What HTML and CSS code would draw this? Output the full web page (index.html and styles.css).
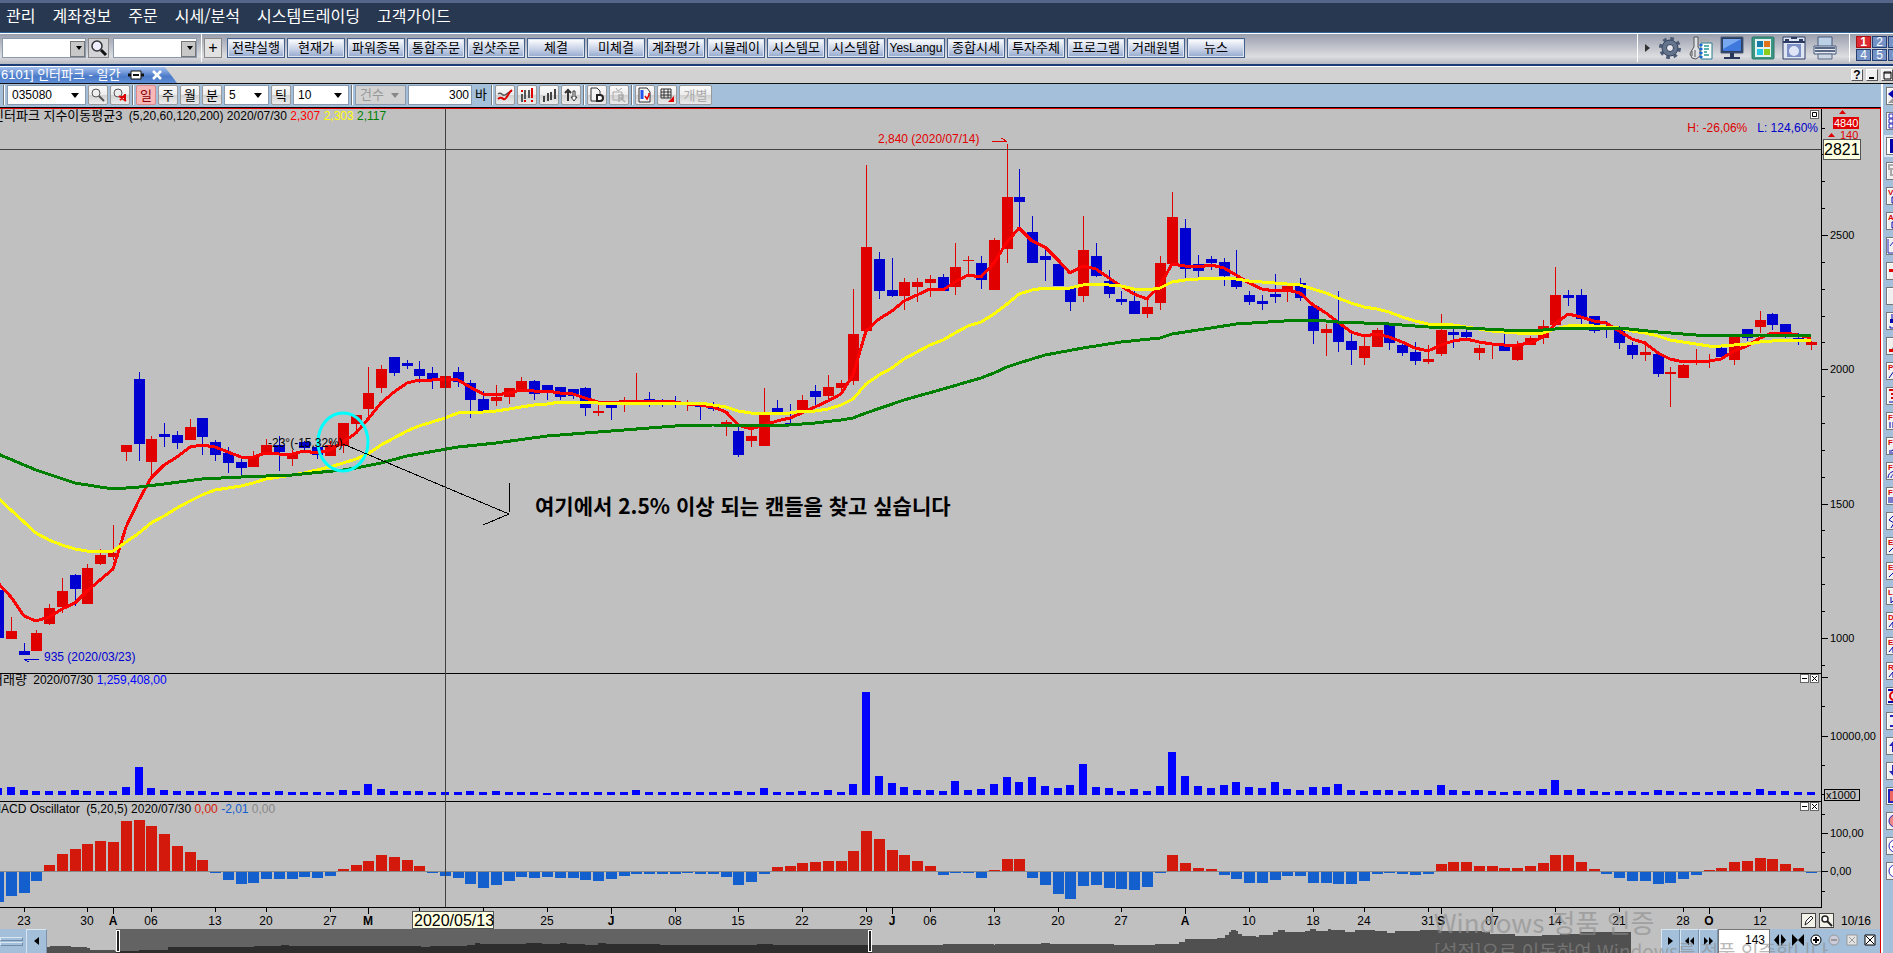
FILE: index.html
```
<!DOCTYPE html>
<html lang="ko">
  <head>
    <meta charset="utf-8">
    <title>인터파크 - 일간</title>
    <link rel="stylesheet" href="styles.css">
  </head>
  <body>
    <nav class="menu">
      <a href="#">관리</a>
      <a href="#">계좌정보</a>
      <a href="#">주문</a>
      <a href="#">시세/분석</a>
      <a href="#">시스템트레이딩</a>
      <a href="#">고객가이드</a>
    </nav>

    <div class="toolbar">
      <span class="combo boxed"><select aria-label="종목"><option></option></select></span>
      <button type="button" class="find" aria-label="검색">
        <svg width="18" height="18" viewBox="0 0 18 18"><circle cx="7" cy="7" r="5" fill="#eef" stroke="#333" stroke-width="1.5"/><path d="M11 11l5 5" stroke="#111" stroke-width="3"/></svg>
      </button>
      <span class="combo boxed low"><select aria-label="화면"><option></option></select></span>
      <i class="bar"></i>
      <button type="button" class="plus">+</button>
      <div class="quick">
        <button type="button">전략실행</button>
        <button type="button">현재가</button>
        <button type="button">파워종목</button>
        <button type="button">통합주문</button>
        <button type="button">원샷주문</button>
        <button type="button">체결</button>
        <button type="button">미체결</button>
        <button type="button">계좌평가</button>
        <button type="button">시뮬레이</button>
        <button type="button">시스템모</button>
        <button type="button">시스템합</button>
        <button type="button">YesLangu</button>
        <button type="button">종합시세</button>
        <button type="button">투자주체</button>
        <button type="button">프로그램</button>
        <button type="button">거래원별</button>
        <button type="button">뉴스</button>
      </div>
      <i class="bar push"></i>
      <div class="apps">
        <svg class="more" width="5" height="8" viewBox="0 0 5 8"><path d="M0 0l5 4-5 4z" fill="#333"/></svg>
        <button type="button" aria-label="설정">
          <svg width="24" height="24" viewBox="0 0 24 24"><circle cx="12" cy="12" r="8" fill="#66758e" stroke="#33415c"/><circle cx="12" cy="12" r="9.5" fill="none" stroke="#4b5a75" stroke-width="3" stroke-dasharray="3.7 3.76"/><circle cx="12" cy="12" r="3.5" fill="#e8e8ee" stroke="#33415c"/></svg>
        </button>
        <button type="button" aria-label="계정">
          <svg width="24" height="24" viewBox="0 0 24 24"><path d="M5 1h4v10l2 3v6l-4 3-4-1-2-4 2-4 2-3z" fill="#dde1e6" stroke="#555"/><path d="M3 15v5M6 14v7" stroke="#555" fill="none"/><path d="M12 6V4h7v2" stroke="#aaa" stroke-width="2" fill="none"/><path d="M12 7h11v16H12z" fill="#fff" stroke="#2b7a8f"/><path d="M15 10h5M15 13h5M15 16h3M15 19h5" stroke="#2a9a98" stroke-width="1.5"/><path d="M12 8v14" stroke="#1a66d8" stroke-width="3" stroke-dasharray="2 2"/></svg>
        </button>
        <button type="button" aria-label="모니터">
          <svg width="24" height="24" viewBox="0 0 24 24"><path d="M1 1h22v16H1z" fill="#2d3f60" stroke="#4a5c7c"/><path d="M3 3h18v12H3z" fill="#3f79dd"/><path d="M3 3h18L3 13z" fill="#78a8f0"/><path d="M10 17h4v4h6v2H4v-2h6z" fill="#28385a"/></svg>
        </button>
        <button type="button" aria-label="화면배치">
          <svg width="24" height="24" viewBox="0 0 24 24"><rect x="1" y="1" width="22" height="22" rx="1" fill="#3a9584" stroke="#2c7768"/><path d="M4 3h16v18H4z" fill="#e3f2ee"/><path d="M6 5h6v6H6z" fill="#167aa8"/><path d="M13 5h6v6h-6z" fill="#e0721a"/><path d="M6 13h6v6H6z" fill="#26c7e2"/><path d="M13 13h6v6h-6z" fill="#8ccc1a"/></svg>
        </button>
        <button type="button" aria-label="캡처">
          <svg width="24" height="24" viewBox="0 0 24 24"><path d="M1 1h22v22H1z" fill="#dfe5f3" stroke="#2d3c62"/><path d="M1 6h22" stroke="#2d3c62" stroke-width="2"/><path d="M3 4h4M9 2h6M17 4h4" stroke="#2d3c62" stroke-width="2"/><path d="M5 8h14v13H5z" fill="#7d90c6"/><circle cx="12" cy="15" r="5" fill="#dfe5f7"/></svg>
        </button>
        <button type="button" aria-label="인쇄">
          <svg width="24" height="24" viewBox="0 0 24 24"><path d="M5 1h14v10H5z" fill="#bcd0e6" stroke="#46597a"/><path d="M1 10h22v8H1z" fill="#e8ebf0" stroke="#46597a"/><path d="M2 12h20M2 15h20" stroke="#5a6a86" stroke-width="2"/><path d="M5 18h14v5H5z" fill="#cdd7e4" stroke="#5a6a86"/></svg>
        </button>
      </div>
      <i class="bar"></i>
      <div class="desks">
        <button type="button" class="on">1</button><button type="button">2</button><button type="button">3</button>
        <button type="button">4</button><button type="button">5</button><button type="button">6</button>
      </div>
    </div>

    <div class="tabs">
      <div class="tab">
        <span>6101] 인터파크 - 일간</span>
        <svg width="18" height="10" viewBox="0 0 18 10"><path d="M5 5H1M17 5h-4" stroke="#111" stroke-width="3"/><path d="M4 1h10v8H4z" fill="#fff" stroke="#111"/><path d="M6 5h6" stroke="#111" stroke-width="2"/></svg>
        <button type="button" aria-label="닫기"><svg width="10" height="10" viewBox="0 0 10 10"><path d="M1 1l8 8M9 1L1 9" stroke="#fff" stroke-width="2.5"/></svg></button>
      </div>
      <div class="win">
        <button type="button">?</button>
        <button type="button" aria-label="최소화"><svg width="9" height="9" viewBox="0 0 9 9"><path d="M1 7h5" stroke="#000" stroke-width="2"/></svg></button>
        <button type="button" aria-label="최대화"><svg width="9" height="9" viewBox="0 0 9 9"><path d="M1 1h7v7H1zM1 2h7" fill="none" stroke="#000"/></svg></button>
      </div>
    </div>

    <div class="work">
      <main>
        <div class="tools">
          <i class="bar"></i>
          <span class="combo code"><select aria-label="종목코드"><option>035080</option></select></span>
          <button type="button" aria-label="종목검색"><svg width="14" height="14" viewBox="0 0 14 14"><circle cx="5" cy="5" r="4" fill="#eee" stroke="#555"/><path d="M8 8l5 5" stroke="#555" stroke-width="2"/></svg></button>
          <button type="button" aria-label="검색취소"><svg width="14" height="14" viewBox="0 0 14 14"><circle cx="5" cy="5" r="4" fill="#eee" stroke="#555"/><path d="M6 8l7 5M12 6v6M6 9h7M7 12l5-5" stroke="#d00" stroke-width="2"/></svg></button>
          <i class="bar"></i>
          <div class="period">
            <button type="button" class="on">일</button>
            <button type="button">주</button>
            <button type="button">월</button>
            <button type="button">분</button>
          </div>
          <span class="combo min"><select aria-label="분"><option>5</option></select></span>
          <button type="button">틱</button>
          <span class="combo tick"><select aria-label="틱"><option>10</option></select></span>
          <i class="bar"></i>
          <span class="combo count"><select aria-label="건수" disabled><option>건수</option></select></span>
          <label class="bars"><input type="text" value="300">바</label>
          <i class="bar"></i>
          <div class="draw">
            <button type="button" aria-label="추세"><svg width="16" height="16" viewBox="0 0 16 16"><path d="M1 7c4-3 4 3 7 1s4-3 7-4" fill="none" stroke="#555" stroke-width="1.5"/><path d="M1 12c5-4 5 3 8-1s3-6 6-8" fill="none" stroke="#e00000" stroke-width="2"/></svg></button>
            <button type="button" aria-label="캔들"><svg width="16" height="16" viewBox="0 0 16 16"><path d="M3 7v8M6 3v9M10 3v8" stroke="#555" stroke-width="2"/><path d="M13 1v10M3 3v2M6 13v2M13 13v2" stroke="#e00000" stroke-width="2"/></svg></button>
            <button type="button" aria-label="바"><svg width="16" height="16" viewBox="0 0 16 16"><path d="M3 9v6M7 6v8M10 5v8M14 2v10" stroke="#444" stroke-width="2"/></svg></button>
            <button type="button" aria-label="뒤집기"><svg width="16" height="16" viewBox="0 0 16 16"><path d="M5 14V4M2 6l3-3 3 3" stroke="#333" stroke-width="2" fill="none"/><path d="M10 4h2v6h2l-3 4-3-4h2z" fill="#fff" stroke="#333"/></svg></button>
          </div>
          <i class="bar"></i>
          <button type="button" aria-label="문서"><svg width="16" height="16" viewBox="0 0 16 16"><path d="M2 1h6l3 3v10H2z" fill="#f4f4f4" stroke="#333"/><path d="M8 8h3c4 0 4 6 0 6H8z" fill="#fff" stroke="#222" stroke-width="2"/></svg></button>
          <button type="button" aria-label="새로고침" disabled><svg width="16" height="16" viewBox="0 0 16 16"><path d="M2 5h9v8H2zM5 1l2 3 4-3" fill="none" stroke="#aaa"/><path d="M8 8h4v3H8zM8 11v4M10 11l4 4" stroke="#aaa" fill="none" stroke-width="1.5"/></svg></button>
          <i class="bar"></i>
          <button type="button" aria-label="차트저장"><svg width="16" height="16" viewBox="0 0 16 16"><path d="M2 1h8l3 4v10H2z" fill="#f4f4f4" stroke="#333"/><path d="M5 3v9" stroke="#25e" stroke-width="3"/><path d="M8 9l2 3 2-4v-2" stroke="#e00000" fill="none" stroke-width="1.5"/></svg></button>
          <button type="button" aria-label="격자"><svg width="16" height="16" viewBox="0 0 16 16"><path d="M2 2h10v9H2zM5 2v9M9 2v9M2 5h10M2 8h10" fill="none" stroke="#333"/><path d="M15 9v6H9z" fill="#e00000"/></svg></button>
          <button type="button" class="each" disabled>개별</button>
        </div>

        <div class="stage">
          <svg id="chart"></svg>
          <p class="legend price"><b>인터파크 지수이동평균3</b> (5,20,60,120,200) 2020/07/30 <em class="red">2,307</em> <em class="yellow">2,303</em> <em class="green">2,117</em></p>
          <p class="legend vol"><b>거래량</b> 2020/07/30 <em class="blue">1,259,408,00</em></p>
          <p class="legend macd">MACD Oscillator &nbsp;(5,20,5) 2020/07/30 <em class="crimson">0,00</em> <em class="azure">-2,01</em> <em class="grey">0,00</em></p>
          <p class="range"><em class="up">H: -26,06%</em><em class="down">L: 124,60%</em></p>
          <div class="panebtn first"><button type="button" aria-label="최대화"><svg width="7" height="7" viewBox="0 0 7 7"><path d="M1.5 1.5h4v4h-4z" fill="none" stroke="#000"/></svg></button></div>
          <div class="panebtn second">
            <button type="button" aria-label="접기"><svg width="7" height="7" viewBox="0 0 7 7"><path d="M1 3.5h5" stroke="#000"/></svg></button>
            <button type="button" aria-label="닫기"><svg width="7" height="7" viewBox="0 0 7 7"><path d="M1 1l5 5M6 1L1 6" stroke="#000"/></svg></button>
          </div>
          <div class="panebtn third">
            <button type="button" aria-label="접기"><svg width="7" height="7" viewBox="0 0 7 7"><path d="M1 3.5h5" stroke="#000"/></svg></button>
            <button type="button" aria-label="닫기"><svg width="7" height="7" viewBox="0 0 7 7"><path d="M1 1l5 5M6 1L1 6" stroke="#000"/></svg></button>
          </div>
          <div class="datebtn">
            <button type="button" aria-label="편집"><svg width="12" height="12" viewBox="0 0 12 12"><path d="M2 10l1-4 5-5 2 2-5 5z" fill="#fff" stroke="#222"/></svg></button>
            <button type="button" aria-label="확대"><svg width="12" height="12" viewBox="0 0 12 12"><circle cx="4" cy="4" r="3" fill="#fff" stroke="#222" stroke-width="1.5"/><path d="M6 6l5 5" stroke="#222" stroke-width="2"/></svg></button>
            <span>10/16</span>
          </div>
        </div>

        <div class="scroller">
          <div class="grip"><i></i><i></i></div>
          <button type="button" class="step" aria-label="이전"><svg width="5" height="8" viewBox="0 0 5 8"><path d="M5 0L0 4l5 4z"/></svg></button>
          <svg id="overview"></svg>
          <button type="button" class="step" aria-label="다음"><svg width="5" height="8" viewBox="0 0 5 8"><path d="M0 0l5 4-5 4z"/></svg></button>
          <button type="button" class="step" aria-label="뒤로"><svg width="9" height="8" viewBox="0 0 9 8"><path d="M4 0L0 4l4 4zM9 0L5 4l4 4z"/></svg></button>
          <button type="button" class="step" aria-label="앞으로"><svg width="9" height="8" viewBox="0 0 9 8"><path d="M0 0l4 4-4 4zM5 0l4 4-4 4z"/></svg></button>
          <input type="text" class="shown" aria-label="표시 개수" value="143">
          <div class="zoom">
            <button type="button" aria-label="넓게"><svg width="12" height="12" viewBox="0 0 12 12"><path d="M5 0v12L0 6zM7 0v12l5-6z"/></svg></button>
            <button type="button" aria-label="좁게"><svg width="12" height="12" viewBox="0 0 12 12"><path d="M0 0v12l6-6zM12 0v12L6 6z"/></svg></button>
            <button type="button" aria-label="확대"><svg width="12" height="12" viewBox="0 0 12 12"><circle cx="6" cy="6" r="5" fill="#fff" stroke="#000"/><path d="M3 6h6M6 3v6" stroke="#000" stroke-width="2"/></svg></button>
            <button type="button" aria-label="축소" disabled><svg width="12" height="12" viewBox="0 0 12 12"><circle cx="6" cy="6" r="5" fill="#ccd" stroke="#999"/><path d="M3 6h6" stroke="#999" stroke-width="2"/></svg></button>
            <button type="button" aria-label="맞춤" disabled><svg width="12" height="12" viewBox="0 0 12 12"><path d="M1 1h10v10H1zM3 3l6 6M9 3L3 9" fill="#e4e4e4" stroke="#999"/></svg></button>
            <button type="button" aria-label="초기화"><svg width="12" height="12" viewBox="0 0 12 12"><path d="M1 1h10v10H1zM2 2l8 8M10 2l-8 8" fill="#fff" stroke="#000"/></svg></button>
          </div>
        </div>
      </main>
      <aside class="rail" id="rail"></aside>
    </div>

    <div class="activate">
      <h2>Windows 정품 인증</h2>
      <p>[설정]으로 이동하여 Windows를 정품 인증합니다.</p>
    </div>

    <script src="chart.js"></script>
  </body>
</html>
```
FILE: styles.css
```
* { box-sizing: border-box; }

body { margin: 0; overflow: hidden; background: #c0c0c0; color: #000; font: 12px/14px "Liberation Sans", "Noto Sans CJK KR", sans-serif; }

button { margin: 0; padding: 0; border: 0; background: none; font: inherit; color: inherit; display: flex; align-items: center; justify-content: center; flex-shrink: 0; overflow: hidden; white-space: nowrap; }
input, select { font: inherit; color: inherit; }
em, b { font-style: normal; font-weight: normal; }
svg { display: block; flex-shrink: 0; }

/* main menu */
.menu { display: flex; align-items: center; gap: 17px; height: 33px; padding: 0 6px 5px; border-top: 3px solid #56668a; border-bottom: 1px solid #2f6496; background: #283851; }
.menu a { color: #fff; text-decoration: none; white-space: nowrap; font: 16px/20px "Noto Sans CJK KR", sans-serif; }

/* main toolbar */
.toolbar { display: flex; align-items: center; height: 33px; padding: 0 0 2px 2px; border-top: 1px solid #fff; border-bottom: 2px solid #1c3d75; background: linear-gradient(#9a9fae, #dcdde0 75%, #b8bac2); }
.bar { width: 2px; height: 20px; border-left: 1px solid #777; border-right: 1px solid #fff; flex-shrink: 0; }
.toolbar .bar { height: 28px; border-left: 0; }

.combo { position: relative; height: 20px; flex-shrink: 0; }
.combo select { appearance: none; width: 100%; height: 100%; margin: 0; padding: 0 3px; border: 1px solid #8a9aae; border-radius: 0; background: #fff; }
.combo::after { content: ""; position: absolute; right: 7px; top: 8px; border: 4px solid transparent; border-top: 5px solid #000; border-bottom: 0; pointer-events: none; }
.combo.boxed { width: 84px; }
.combo.boxed::before { content: ""; position: absolute; right: 1px; top: 3px; width: 13px; height: 14px; border: 1px solid #777; background: #c8c8c8; pointer-events: none; z-index: 1; }
.combo.boxed::after { right: 4px; z-index: 2; border-width: 4px 3px 0; }
.combo.low { margin-right: 3px; }

.find { width: 21px; height: 20px; margin: 0 4px 0 2px; border: 1px solid #888; background: #d4d4d8; }
.plus { width: 18px; height: 20px; margin: 0 5px 0 2px; border: 1px solid #888; background: #e2e2e2; font-size: 16px; }
.quick { display: flex; gap: 2px; }
.quick button { width: 58px; height: 20px; border: 1px solid #44608c; background: linear-gradient(#fff, #c3cee4 60%, #93a8ce); font: 13px/16px "Liberation Sans", "Noto Sans CJK KR", sans-serif; box-shadow: inset 0 0 0 1px #dde4f2; }
.quick button:nth-child(12) { font-size: 12px; }
.push { margin-left: auto; }
.apps { display: flex; align-items: center; gap: 7px; padding: 0 11px 0 7px; }
.apps .more { margin-right: 1px; }
.desks { display: grid; grid-template-columns: repeat(3, 15px); gap: 1px; width: 43px; padding-left: 6px; overflow: hidden; flex-shrink: 0; }
.desks button { height: 12px; border: 1px solid #243f70; background: #7592c6; color: #fff; line-height: 10px; }
.desks .on { border-color: #a11; background: #dd2b33; font-weight: bold; }

/* document tab */
.tabs { display: flex; justify-content: space-between; height: 18px; border-top: 1px solid #fff; border-bottom: 1px solid #111; background: #d2d2d2; }
.tab { display: flex; align-items: center; width: 177px; padding-left: 1px; background: linear-gradient(#a3bfee, #4b7ac8 60%, #5f8dd6); clip-path: polygon(0 0, 165px 0, 177px 100%, 0 100%); color: #fff; font-size: 13px; }
.tab span { width: 126px; white-space: nowrap; }
.tab button { margin-left: 7px; }
.win { display: flex; align-items: center; gap: 3px; }
.win button { width: 12px; height: 12px; background: #f0f0f0; border: 1px solid #fff; border-right-color: #555; border-bottom-color: #555; font-weight: bold; }

.work { display: flex; }
main { flex: 1; min-width: 0; }

/* chart tools */
.tools { display: flex; align-items: center; gap: 2px; height: 23px; padding: 0 1px 2px 3px; background: #a3bfd9; font-size: 13px; }
.tools .combo select { padding: 0 4px; font-size: 12px; }
.tools button { width: 20px; height: 20px; border: 1px solid #999; border-radius: 2px; background: linear-gradient(#fafafa, #ececec 50%, #d3d3d3 52%, #ececec); font-family: "Noto Sans CJK KR", sans-serif; }
.tools .on { border-color: #d88; background: #f8b8b8; color: #800; }
.period, .draw { display: flex; gap: 2px; }
.tools .code { width: 79px; }
.tools .min { width: 45px; }
.tools .tick { width: 56px; }
.tools .count { width: 51px; }
.tools .count select { background: #d2d2d2; color: #999; opacity: 1; font-size: 13px; }
.tools .count::after { border-top-color: #888; }
.bars { display: flex; align-items: center; gap: 3px; width: 81px; }
.bars input { width: 64px; height: 20px; border: 1px solid #8a9aae; padding: 0 2px; text-align: right; font-size: 12px; }
.tools .each { width: 33px; color: #aaa; }

/* chart */
.stage { position: relative; border-top: 1px solid #000; border-right: 1px solid #e00000; box-shadow: inset 0 1px #e00000; padding-top: 1px; height: 822px; overflow: hidden; }
#chart { width: 100%; height: 820px; }
#chart text { font: 12px "Liberation Sans", "Noto Sans CJK KR", sans-serif; }
#chart text.value { font-size: 11px; }
#chart text.month { font-weight: bold; }
#chart text.tip { font-size: 16px; }
#chart text.note { font: bold 21px "Noto Sans CJK KR", sans-serif; }
#chart rect, #chart line, #chart polyline { shape-rendering: crispEdges; }

.legend { position: absolute; margin: 0; left: 0; white-space: nowrap; }
.legend b { margin-right: 3px; font-size: 13px; }
.price { top: 1px; text-indent: -8px; }
.vol { top: 565px; text-indent: -9px; }
.macd { top: 694px; text-indent: -9px; }
.red { color: #f00; }
.yellow { color: #ff0; }
.green { color: #008000; }
.blue { color: #00f; }
.crimson { color: #d3190b; }
.azure { color: #125fcd; }
.grey { color: #888; }
.range { position: absolute; right: 62px; top: 13px; margin: 0; display: flex; gap: 10px; }
.up { color: #d00; }
.down { color: #00c; }

.panebtn { position: absolute; right: 61px; display: flex; gap: 1px; }
.panebtn button { width: 9px; height: 9px; border: 1px solid #666; background: #fff; }
.first { top: 2px; }
.second { top: 566px; }
.third { top: 694px; }
.datebtn { position: absolute; right: 6px; bottom: 1px; display: flex; align-items: center; gap: 3px; }
.datebtn button { width: 15px; height: 15px; border: 1px solid #444; background: #f2f2e8; }
.datebtn span { width: 33px; margin-left: 4px; }

/* bottom scroller */
.scroller { display: flex; height: 24px; background: #a3bfd9; border-right: 1px solid #e00000; }
.grip { width: 26px; padding-top: 8px; }
.grip i { display: block; width: 23px; height: 4px; margin-bottom: 1px; border: 1px solid #d8e6f4; border-right-color: #6f8cab; border-bottom-color: #6f8cab; }
.step { width: 19px; padding-bottom: 2px; border: 1px solid #d8e6f4; border-right-color: #7c93ad; border-bottom: 0; }
.grip + .step { width: 21px; }
#overview { flex: 1; min-width: 0; height: 24px; background: #c0c0c0; shape-rendering: crispEdges; }
.shown { width: 52px; height: 24px; border: 1px solid #777; border-bottom: 0; text-align: right; padding: 0 4px 3px; }
.zoom { display: flex; align-items: center; gap: 6px; padding: 0 4px 2px; }

/* drawing tools on the right edge */
.rail { width: 12px; padding: 3px 0 0 3px; border-left: 2px solid #fff; background: #a3bfd9; overflow: hidden; }
.rail button { width: 20px; height: 18px; margin-bottom: 7px; border: 1px solid #777; background: #f0f0f0; box-shadow: inset 1px 1px #fff; }
.rail .on { background: #fff; box-shadow: 0 0 0 2px #dbe7f2; }
.rail text { font: bold 8px "Liberation Sans", sans-serif; }

.activate { position: absolute; left: 76%; top: 908px; margin-left: -5px; color: #8c8c8c; opacity: .6; pointer-events: none; white-space: nowrap; font-family: "Noto Sans CJK KR", sans-serif; }
.activate h2 { margin: 0; font-weight: normal; font-size: 26px; line-height: 28px; }
.activate p { margin: 0; padding-top: 4px; font-size: 19px; line-height: 22px; height: 17px; overflow: hidden; }
```
FILE: chart.js
```
var RED = '#e00000', BLUE = '#0000d0';

// [direction, high, body top, body bottom, low]
var candles = [
  ['d',590,590,638,638],['u',617,631,639,639],['d',643,651,655,655],['u',630,633,651,651],['u',604,608,624,625],
  ['u',578,591,607,613],['d',574,575,589,606],['u',564,568,604,604],['u',549,555,564,565],['u',525,553,557,560],
  ['u',445,445,452,461],['d',372,379,444,461],['u',436,439,462,478],['d',423,434,437,447],['d',431,435,443,449],
  ['u',419,427,440,440],['d',418,418,437,455],['d',440,442,455,461],['d',447,453,463,473],['d',458,462,468,476],
  ['u',451,457,467,467],['u',439,445,453,453],['d',436,445,452,471],['u',450,454,459,466],['d',441,442,448,450],
  ['d',447,447,455,459],['u',441,445,456,456],['u',423,423,446,453],['u',415,415,424,433],['u',367,393,409,416],
  ['u',365,369,388,393],['d',357,357,373,376],['d',360,363,366,369],['d',361,369,376,383],['d',367,373,380,389],
  ['u',375,376,388,388],['d',367,372,382,387],['d',380,383,400,418],['d',391,399,411,411],['u',385,397,401,406],
  ['u',388,388,397,404],['u',377,381,391,391],['d',380,381,394,400],['d',385,385,393,400],['d',387,387,397,400],
  ['d',389,389,396,399],['d',387,388,408,416],['u',401,411,413,416],['d',404,404,408,420],['u',397,400,403,412],
  ['u',373,400,402,402],['d',392,399,402,407],['d',399,401,402,407],['d',396,403,404,408],['u',400,403,404,411],
  ['d',404,405,407,420],['d',402,407,409,411],['u',420,422,424,436],['d',423,431,455,457],['u',427,436,441,447],
  ['u',388,415,446,446],['d',400,408,412,412],['d',404,423,424,424],['u',395,400,411,411],['d',385,391,397,408],
  ['u',375,387,396,400],['u',380,383,388,391],['u',289,334,381,385],['u',165,247,331,331],['d',252,259,291,299],
  ['d',258,290,296,297],['u',278,282,296,310],['u',278,282,287,302],['u',275,279,283,297],['d',274,277,291,291],
  ['u',243,267,287,295],['u',256,260,261,274],['d',256,263,280,289],['u',238,240,290,290],['u',144,197,249,263],
  ['d',169,197,202,228],['d',216,232,263,263],['d',248,256,260,281],['d',264,264,286,286],['d',286,288,302,311],
  ['u',216,250,296,302],['d',243,256,276,277],['d',270,281,294,298],['d',291,299,302,305],['d',291,301,314,314],
  ['u',300,307,314,318],['u',256,263,303,310],['u',192,217,264,264],['d',219,228,269,278],['d',255,264,271,278],
  ['d',256,259,263,270],['d',258,262,276,286],['d',250,280,287,289],['d',291,295,302,305],['d',295,301,304,310],
  ['d',274,294,297,303],['u',285,286,292,302],['d',278,283,298,301],['d',303,306,331,344],['u',324,329,333,356],
  ['d',291,323,342,352],['d',333,341,350,365],['u',337,346,358,365],['u',328,330,347,347],['d',325,325,343,350],
  ['d',342,345,353,356],['d',342,352,361,365],['u',345,359,362,364],['u',314,330,354,356],['d',329,332,335,348],
  ['d',329,332,337,339],['u',345,348,353,360],['u',344,344,345,359],['d',333,346,351,351],['u',341,346,360,361],
  ['u',336,338,345,345],['u',320,326,338,344],['u',267,295,325,325],['d',290,295,298,306],['d',289,295,319,325],
  ['d',316,316,331,333],['d',321,329,330,338],['d',326,329,343,349],['d',342,345,355,359],['u',341,352,355,361],
  ['d',353,354,374,377],['u',367,372,374,407],['u',364,365,378,378],['u',349,361,362,365],['u',354,360,361,368],
  ['d',347,348,357,359],['u',334,334,360,365],['d',329,329,338,341],['u',311,320,327,333],['d',313,314,325,330],
  ['d',324,324,333,338],['d',333,338,340,345],['u',341,342,345,350]
];

// moving averages
var fast = [583,597,616,621,617,609,603,591,580,569,527,500,478,465,457,447,445,447,452,457,457,453,454,454,451,453,450,442,433,419,
  403,392,383,380,380,379,380,387,394,395,393,390,391,391,393,394,398,402,403,402,401,402,401,402,404,405,407,412,425,429,
  425,421,418,413,407,401,394,375,331,319,311,301,295,289,290,282,275,277,263,242,228,241,247,260,273,266,269,278,286,294,
  299,285,264,266,267,265,268,275,283,289,291,290,293,305,313,322,332,336,334,337,342,348,351,345,341,339,342,344,345,345,
  343,337,324,314,317,321,323,331,339,343,353,359,362,361,361,359,351,346,338,333,333,335,338];
var middle = [498,510,522,533,540,545,549,551,551,551,542,533,523,516,508,501,495,490,488,486,483,479,477,475,473,470,467,463,459,454,
  445,438,431,426,422,418,413,412,412,411,409,407,405,404,402,402,402,403,403,403,403,403,403,403,403,403,405,407,411,413,
  413,413,413,411,411,409,405,399,384,375,368,359,352,345,340,333,326,322,314,304,294,290,288,288,288,285,284,285,286,289,
  290,288,282,280,279,278,278,279,281,282,283,284,285,289,293,298,303,307,309,312,317,321,324,324,325,327,329,331,332,333,
  333,333,329,326,325,326,327,328,331,333,336,340,342,344,346,346,345,344,342,341,340,340,340];
// slow average changes little, so only its turning points: [bar, y]
var slow = [[0,454],[3,470],[6,483],[9,489],[11,487],[13,484],[16,479],[19,477],[23,475],[27,470],[28,468],[30,463],[32,456],[36,447],
  [39,443],[43,436],[48,431],[53,426],[56,425],[59,426],[62,425],[64,423],[66,420],[67,418],[68,413],[71,400],[74,389],[77,378],
  [78,373],[79,367],[80,363],[82,355],[85,348],[88,342],[91,338],[92,334],[95,328],[97,324],[102,320],[103,320],[105,322],
  [109,324],[112,327],[115,328],[118,330],[121,330],[123,328],[127,328],[130,332],[133,335],[135,336],[138,335],[142,335]];

var volume = [7,8,5,4,4,4,5,4,4,4,8,28,7,5,4,4,4,3,4,3,3,3,4,3,3,3,3,5,4,11,6,4,4,4,3,3,3,4,3,4,3,3,3,2,3,3,3,3,3,3,
  5,3,3,3,3,3,3,3,4,3,7,3,3,4,3,5,3,11,103,19,12,8,5,5,4,14,5,6,11,18,13,18,9,7,10,31,8,7,4,6,4,9,43,19,9,7,10,13,8,7,
  13,6,5,8,8,11,5,4,5,5,4,5,5,10,5,4,5,4,3,4,4,6,15,5,6,4,3,4,4,3,5,4,3,3,3,4,4,3,6,4,4,3,3];
var macd = [-31,-25,-22,-10,6,17,22,27,30,29,50,51,45,37,25,19,11,-2,-9,-13,-12,-8,-8,-8,-6,-7,-5,2,6,10,16,14,11,5,-2,-5,-7,-13,-17,-14,
  -10,-6,-7,-6,-7,-7,-9,-10,-8,-5,-3,-3,-3,-3,-2,-3,-3,-6,-14,-11,-3,4,5,8,9,10,10,20,40,32,21,16,10,5,-4,-2,-2,-7,1,12,
  12,-7,-14,-23,-28,-15,-14,-17,-18,-19,-16,-2,16,8,3,2,-4,-8,-12,-12,-9,-5,-5,-12,-12,-13,-13,-10,-3,-2,-3,-4,-3,7,9,9,5,5,3,3,
  5,8,16,16,9,2,-3,-7,-10,-10,-13,-12,-8,-4,1,3,9,10,13,12,7,3,-2];

var dates = [[2,'23'],[7,'30'],[9,'A'],[12,'06'],[17,'13'],[21,'20'],[26,'27'],[29,'M'],[33,''],[38,''],[43,'25'],[48,'J'],[53,'08'],
  [58,'15'],[63,'22'],[68,'29'],[70,'J'],[73,'06'],[78,'13'],[83,'20'],[88,'27'],[93,'A'],[98,'10'],[103,'18'],[107,'24'],[112,'31'],
  [113,'S'],[117,'07'],[122,'14'],[127,'21'],[132,'28'],[134,'O'],[138,'12']];

function rect(x, y, w, h, fill, more) {
  return '<rect x="' + x + '" y="' + y + '" width="' + w + '" height="' + h + '" fill="' + fill + '" ' + (more || '') + '/>';
}
function line(x1, y1, x2, y2, color) {
  return '<line x1="' + x1 + '" y1="' + y1 + '" x2="' + x2 + '" y2="' + y2 + '" stroke="' + (color || '#000') + '"/>';
}
function text(x, y, str, color, cls, anchor) {
  return '<text x="' + x + '" y="' + y + '" fill="' + (color || '#000') + '" class="' + (cls || '') + '" text-anchor="' + (anchor || 'start') + '">' + str + '</text>';
}
function curve(points, color) {
  return '<polyline points="' + points.join(' ') + '" fill="none" stroke="' + color + '" stroke-width="3" stroke-linejoin="round"/>';
}

function drawChart() {
  var svg = document.getElementById('chart');
  var width = svg.clientWidth;
  var plot = width - 59;
  var scale = plot / 1821;
  var X = function (i) { return Math.floor((12.765 * i - 1.4) * scale); };
  var S = function (x) { return Math.round(x * scale); };
  var out = '';

  svg.setAttribute('viewBox', '0 109 ' + width + ' 820');

  candles.forEach(function (c, i) {
    var color = c[0] == 'u' ? RED : BLUE;
    out += rect(X(i), c[1], 1, c[4] - c[1], color);
    out += rect(X(i) - 5, c[2], 11, Math.max(1, c[3] - c[2]), color);
  });
  out += curve(fast.map(function (y, i) { return X(i) + ',' + y; }), '#f00');
  out += curve(middle.map(function (y, i) { return X(i) + ',' + y; }), '#ff0');
  out += curve(slow.map(function (p) { return X(p[0]) + ',' + p[1]; }), '#008000');

  volume.forEach(function (v, i) { out += rect(X(i) - 4, 795 - v, 8, v, '#00f'); });
  macd.forEach(function (v, i) {
    out += rect(X(i) - 5, v > 0 ? 871 - v : 871, 11, Math.abs(v), v > 0 ? '#d3190b' : '#125fcd');
  });
  out += rect(0, 871, plot, 1, '#888');

  // pane borders
  out += rect(0, 673, plot + 1, 1, '#000') + rect(0, 801, plot + 1, 1, '#000') + rect(0, 907, plot + 1, 1, '#000');
  out += rect(plot, 109, 1, 799, '#000');

  // value axes
  for (var k = -4; k <= 16; k++) {
    out += rect(plot + 1, Math.round(235 + k * 26.85), k % 5 ? 3 : 6, 1, '#000');
  }
  [[677,6],[706,3],[736,6],[765,3],[794,6],[814,3],[833,6],[852,3],[871,6],[891,3]].forEach(function (t) {
    out += rect(plot + 1, t[0], t[1], 1, '#000');
  });
  [[239,'2500'],[373,'2000'],[508,'1500'],[642,'1000'],[740,'10000,00'],[837,'100,00'],[875,'0,00']].forEach(function (t) {
    out += text(plot + 9, t[0], t[1], '#000', 'value');
  });
  out += rect(plot + 3.5, 789.5, 35, 11, '#c0c0c0', 'stroke="#000"') + text(plot + 5, 799, 'x1000', '#000', 'value');

  // date axis
  dates.forEach(function (d) {
    var month = isNaN(d[1]);
    out += rect(X(d[0]), 908, 1, month ? 6 : 4, '#000');
    if (d[1]) out += text(X(d[0]), 925, d[1], '#000', month ? 'month' : '', 'middle');
  });

  // high and low marks
  out += text(S(878), 143, '2,840 (2020/07/14)', '#e00000') + line(S(992), 141.5, S(1007), 141.5, '#e00000') + line(S(1001), 138, S(1007), 141.5, '#e00000');
  out += text(S(44), 661, '935 (2020/03/23)', BLUE) + line(S(24), 659.5, S(39), 659.5, BLUE) + line(S(24), 659.5, S(29), 662, BLUE);

  // user drawing
  out += '<ellipse cx="' + S(343) + '" cy="442" rx="25" ry="29" fill="none" stroke="#0ff" stroke-width="3"/>';
  out += text(S(268), 447, '-23°(-15,32%)');
  out += line(S(343), 444, S(509), 514) + line(S(509), 514, S(483), 525) + line(S(509) + .5, 483, S(509) + .5, 512);
  out += text(S(535), 514, '여기에서 2.5% 이상 되는 캔들을 찾고 싶습니다', '#000', 'note');

  // crosshair and its value tips
  out += rect(X(35), 109, 1, 798, '#404040') + rect(0, 149, plot, 1, '#404040');
  out += rect(X(35) - 32.5, 911.5, 81, 17, '#ffffe1', 'stroke="#555"') + text(X(35) - 31, 926, '2020/05/13', '#000', 'tip');
  out += '<path d="M' + (plot + 18) + ' 114h7l-3.5-4zM' + (plot + 7) + ' 137h7l-3.5-4z" fill="#e00000"/>';
  out += rect(plot + 12, 117, 26, 12, '#e00000') + text(plot + 13, 127, '4840', '#fff', 'value');
  out += text(plot + 19, 139, '140', '#e00000', 'value');
  out += rect(plot + 2.5, 139.5, 37, 20, '#ffffe1', 'stroke="#555"') + text(plot + 3, 155, '2821', '#000', 'tip');

  svg.innerHTML = out;
}

// whole price history under the range slider: [x, top]
var past = [[0,18],[2,18],[3,17],[24,18],[40,19],[43,21],[68,22],[92,21],[118,21],[121,18],[207,17],[234,16],[242,17],[374,18],[383,17],
  [420,16],[428,14],[433,15],[479,14],[495,15],[513,14],[520,15],[538,16],[551,14],[559,15],[613,16],[710,15],[722,15],[726,16],
  [896,15],[947,16],[948,15],[994,14],[1003,15],[1067,16],[1108,15],[1132,13],[1138,10],[1170,9],[1178,6],[1182,3],[1184,1],[1189,2],
  [1191,5],[1195,7],[1209,8],[1212,6],[1224,6],[1226,3],[1231,1],[1238,3],[1258,2],[1263,0],[1269,2],[1281,0],[1284,1],[1298,3],
  [1308,1],[1328,2],[1340,4],[1348,2],[1373,1],[1393,2],[1435,3],[1443,5],[1468,7],[1495,6],[1513,5],[1533,3],[1584,2]];

function drawOverview() {
  var svg = document.getElementById('overview');
  var width = svg.clientWidth;
  var scale = width / 1614;
  var from = Math.round(69 * scale), to = Math.round(825 * scale);
  var path = 'M0 24';
  past.forEach(function (p) { path += 'H' + Math.round(p[0] * scale) + 'V' + p[1]; });
  path += 'V24z';
  svg.setAttribute('viewBox', '0 0 ' + width + ' 24');
  svg.innerHTML = '<clipPath id="picked"><rect x="' + from + '" y="0" width="' + (to - from) + '" height="24"/></clipPath>' +
    '<path d="' + path + '" fill="#505050"/>' + rect(from, 0, to - from, 24, '#636363') +
    '<path d="' + path + '" fill="#2d2d2d" clip-path="url(#picked)"/>' +
    rect(from + .5, 1.5, 3, 21, '#222', 'stroke="#fff"') + rect(to - 3.5, 1.5, 3, 21, '#222', 'stroke="#fff"');
}

// drawing tool glyphs, top to bottom
function letter(ch, path) {
  return '<text x="2" y="8" fill="#d00">' + ch + '</text><path d="' + path + '" fill="none" stroke="#00a"/>';
}
var glyphs = [
  '<path d="M2 7l5-4v8z" fill="#00a"/><path d="M2 16l6-6v6z" fill="#999"/>',
  '<path d="M3 2h4v4H3zM3 7h4v4H3zM3 12h4v4H3z" fill="#fff" stroke="#22b"/>',
  '<path d="M6 2v14" stroke="#00a" stroke-width="4"/>',
  '<path d="M3 3h5v4H3zM5 8v5h4" fill="none" stroke="#aaa" stroke-width="2"/>',
  letter('V', 'M6 10h4v6H6z'),
  letter('A', 'M6 10h4v6H6z'),
  '<path d="M2 2v14h10M4 9l4-5" fill="none" stroke="#22b"/>',
  '<path d="M3 7h4v3H3z" fill="#d00"/><path d="M7 8h6" stroke="#00a"/>',
  '',
  '<path d="M4 7h4v4H4z" fill="#00a"/><path d="M6 2v6M4 14v2h6" fill="none" stroke="#00a"/>',
  '<path d="M3 12h4v3H3z" fill="#d00"/><path d="M6 12l7-9" stroke="#777"/>',
  letter('P', 'M3 16l5-7'),
  '<path d="M3 3h8M5 7h5M5 11h5" stroke="#d00" stroke-width="2"/><path d="M3 15h8" stroke="#00a"/>',
  letter('F', 'M4 10v6M7 10v6M10 10v6'),
  letter('F', 'M3 14h3l3-4M3 16h8'),
  letter('F', 'M2 16c0-7 8-7 8-7M5 16c0-4 5-4 5-4'),
  letter('F', 'M2 11h9M2 13h9M2 15h9'),
  '<path d="M8 3L3 8l5 3-3 5" fill="none" stroke="#00a"/>',
  letter('E', 'M3 15l6-6'), letter('E', 'M3 15l6-6'), letter('L', 'M5 10v6l4-4'),
  letter('D', 'M3 15l4-5v6'), letter('E', 'M3 15l4-5v6'), letter('R', 'M3 15l4-5v6'),
  '<path d="M2 3h9M2 15h9" stroke="#00a" stroke-width="2"/><circle cx="8" cy="9" r="4" fill="none" stroke="#d00" stroke-width="2"/>',
  '<path d="M4 4h5v5M4 14h5" fill="none" stroke="#22b" stroke-width="2"/>',
  '<path d="M3 9l5-6 5 6zM6 9h4v6H6z" fill="#22b"/>',
  '<path d="M3 9l5 6 5-6zM6 3h4v6H6z" fill="#22b"/>',
  '<path d="M3 3h12v12H3z" fill="#e66" stroke="#22b" stroke-width="2"/>',
  '<circle cx="9" cy="9" r="6" fill="#e88" stroke="#22b"/>',
  '<circle cx="9" cy="9" r="6" fill="#fff" stroke="#22b"/><path d="M6 9l2 3 4-5" fill="none" stroke="#22b"/>',
  '<circle cx="9" cy="9" r="6" fill="#fff" stroke="#22b"/>'
];
document.getElementById('rail').innerHTML = glyphs.map(function (g, i) {
  return '<button type="button" aria-label="그리기 ' + (i + 1) + '"' + (i == 2 ? ' class="on"' : '') + '><svg width="18" height="16" viewBox="1 1 18 16">' + g + '</svg></button>';
}).join('');

function draw() {
  drawChart();
  drawOverview();
}
window.addEventListener('resize', draw);
draw();
```
